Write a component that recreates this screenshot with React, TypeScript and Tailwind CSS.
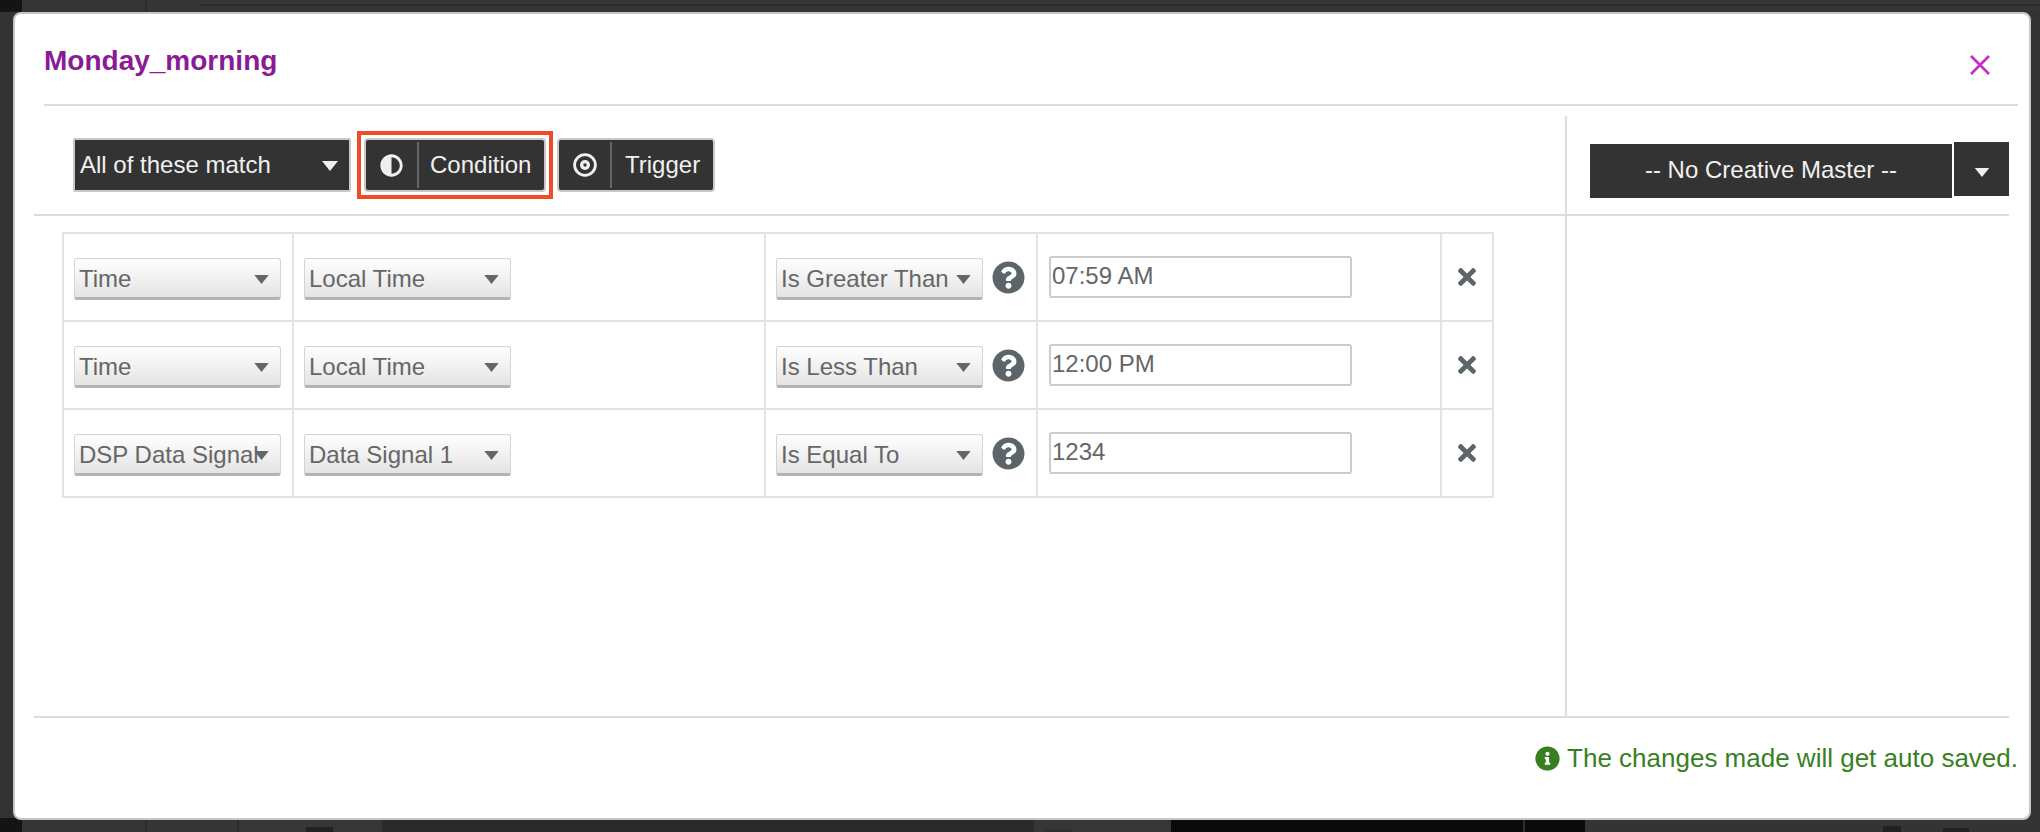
import React from 'react';
import { FaAdjust, FaInfoCircle, FaQuestionCircle, FaTimes } from 'react-icons/fa';

interface Rule {
  field: string;
  source: string;
  operator: string;
  value: string;
}

const rules: Rule[] = [
  { field: 'Time', source: 'Local Time', operator: 'Is Greater Than', value: '07:59 AM' },
  { field: 'Time', source: 'Local Time', operator: 'Is Less Than', value: '12:00 PM' },
  { field: 'DSP Data Signal', source: 'Data Signal 1', operator: 'Is Equal To', value: '1234' },
];

function Caret({ className }: { className: string }) {
  return (
    <svg viewBox="0 0 16 10" className={className} aria-hidden="true">
      <path d="M0 0h16L8 10z" fill="currentColor" />
    </svg>
  );
}

function SelectBox({ label, width }: { label: string; width: string }) {
  return (
    <div
      className={`relative mt-[4px] h-[42px] ${width} flex-none rounded-[3px] border border-b-[3px] border-[#d4d4d4] border-b-[#b4b4b4] bg-gradient-to-b from-white to-[#e4e4e4] pl-[4px] text-[24px] leading-[40px] text-[#666666]`}
    >
      <span className="block h-[38px] overflow-hidden whitespace-nowrap pr-[16px]">{label}</span>
      <Caret className="absolute right-[11px] top-[16px] h-[9px] w-[15px] text-[#666666]" />
    </div>
  );
}

function ToolButton({ icon, label, width, pad }: { icon: React.ReactNode; label: string; width: string; pad: string }) {
  return (
    <div className={`flex h-[54px] ${width} items-stretch rounded-[4px] border-2 border-[#c8c8c8] bg-[#333333] text-[24px] text-[#f0f0f0]`}>
      <span className="flex w-[51px] flex-none items-center justify-center">{icon}</span>
      <span className="my-[2px] w-[2px] flex-none bg-[#666666]" />
      <span className={`flex flex-1 items-center ${pad}`}>{label}</span>
    </div>
  );
}

function Background() {
  return (
    <div className="flex h-[832px] flex-col justify-between bg-[#333333]">
      <div className="flex h-[12px] bg-[#333333]">
        <div className="w-[22px] bg-[#141414]" />
        <div className="w-[123px] bg-[#353535]" />
        <div className="w-[2px] bg-[#2a2a2a]" />
        <div className="flex-1 bg-[#353535]">
          <div className="ml-[53px] mt-[4px] h-[2px] bg-[#2b2b2b]" />
        </div>
      </div>
      <div className="flex h-[14px]">
        <div className="w-[22px] bg-[#141414]" />
        <div className="w-[123px] bg-[#353535]" />
        <div className="w-[2px] bg-[#2a2a2a]" />
        <div className="w-[90px] bg-[#353535]" />
        <div className="w-[2px] bg-[#2a2a2a]" />
        <div className="w-[143px] bg-[#363636] pl-[67px] pt-[9px]">
          <div className="h-[5px] w-[27px] bg-[#222222]" />
        </div>
        <div className="w-[652px] bg-[#2a2a2a]" />
        <div className="w-[137px] bg-[#363636] pl-[10px] pt-[11px]">
          <div className="h-[3px] w-[27px] bg-[#2e2e2e]" />
        </div>
        <div className="w-[352px] bg-[#0a0a0a]" />
        <div className="w-[2px] bg-[#2f2f2f]" />
        <div className="w-[60px] bg-[#0a0a0a]" />
        <div className="flex flex-1 gap-[42px] bg-[#343434] pl-[298px] pt-[8px]">
          <div className="h-[6px] w-[18px] bg-[#222222]" />
          <div className="mt-[2px] h-[4px] w-[26px] bg-[#222222]" />
        </div>
      </div>
    </div>
  );
}

export default function App() {
  return (
    <div className="relative h-[832px] overflow-hidden font-['Liberation_Sans',Arial,sans-serif]">
      <Background />
      <div className="absolute left-[13px] top-[12px] flex h-[808px] w-[2018px] flex-col rounded-[8px] border-2 border-[#c6c6c6] bg-white">
        {/* Header */}
        <div className="ml-[29px] mr-[11px] flex h-[92px] flex-none justify-between border-b-2 border-[#dddddd]">
          <h1 className="pt-[31px] text-[28px] font-bold leading-[32px] text-[#8a1a96]">Monday_morning</h1>
          <svg viewBox="0 0 20 20" className="mr-[28px] mt-[41px] h-[20px] w-[20px] text-[#c42cc4]" aria-hidden="true">
            <path d="M1 1l18 18M19 1L1 19" stroke="currentColor" strokeWidth="2.6" fill="none" />
          </svg>
        </div>

        {/* Body */}
        <div className="ml-[19px] mr-[20px] mt-[10px] flex h-[602px] flex-none border-b-2 border-[#dddddd]">
          <div className="w-[1531px] flex-none">
            <div className="flex h-[100px] items-center border-b-2 border-[#dddddd] pl-[39px]">
              <div className="relative flex h-[54px] w-[278px] flex-none items-center rounded-[2px] border-2 border-[#c8c8c8] bg-[#333333] pl-[5px] text-[24px] text-[#f0f0f0]">
                All of these match
                <Caret className="absolute right-[11px] top-[20px] h-[12px] w-[16px] text-[#f0f0f0]" />
              </div>
              <div className="ml-[6px] flex-none border-4 border-[#f04a26] p-[3px]">
                <ToolButton icon={<FaAdjust className="h-[23px] w-[23px] text-[#f0f0f0]" />} label="Condition" width="w-[182px]" pad="pl-[11px]" />
              </div>
              <div className="ml-[4px] flex-none">
                <ToolButton
                  icon={
                    <svg viewBox="0 0 24 24" className="h-[24px] w-[24px]" aria-hidden="true">
                      <circle cx="12" cy="12" r="10.4" fill="none" stroke="#f0f0f0" strokeWidth="2.8" />
                      <circle cx="12" cy="12" r="5" fill="#f0f0f0" />
                      <circle cx="12" cy="12" r="1.7" fill="#333333" />
                    </svg>
                  }
                  label="Trigger"
                  width="w-[158px]"
                  pad="pl-[13px]"
                />
              </div>
            </div>

            <table className="ml-[28px] mt-[16px] w-[1430px] table-fixed border-collapse">
              <colgroup>
                <col className="w-[230px]" />
                <col className="w-[472px]" />
                <col className="w-[272px]" />
                <col className="w-[404px]" />
                <col className="w-[52px]" />
              </colgroup>
              <tbody>
                {rules.map((rule) => (
                  <tr key={rule.operator} className="h-[88px]">
                    <td className="border-2 border-[#e2e2e2] pl-[10px]">
                      <SelectBox label={rule.field} width="w-[207px]" />
                    </td>
                    <td className="border-2 border-[#e2e2e2] pl-[10px]">
                      <SelectBox label={rule.source} width="w-[207px]" />
                    </td>
                    <td className="border-2 border-[#e2e2e2] pl-[10px]">
                      <div className="flex items-center gap-[9px]">
                        <SelectBox label={rule.operator} width="w-[207px]" />
                        <FaQuestionCircle className="h-[33px] w-[33px] flex-none text-[#5c666a]" />
                      </div>
                    </td>
                    <td className="border-2 border-[#e2e2e2] pl-[11px]">
                      <input
                        readOnly
                        value={rule.value}
                        className="block h-[42px] w-[303px] rounded-[3px] border-2 border-[#cccccc] bg-white pb-[3px] pl-[1px] text-[24px] text-[#666666] outline-none"
                      />
                    </td>
                    <td className="border-2 border-[#e2e2e2]">
                      <FaTimes className="mx-auto h-[26px] w-[20px] text-[#5c666a]" />
                    </td>
                  </tr>
                ))}
              </tbody>
            </table>
          </div>

          <div className="flex-1 border-l-2 border-[#dddddd]">
            <div className="flex h-[100px] items-start border-b-2 border-[#dddddd] pl-[23px] pt-[26px]">
              <div className="mt-[2px] flex h-[54px] w-[362px] flex-none items-center justify-center bg-[#333333] pb-[2px] text-[24px] text-[#f0f0f0]">
                -- No Creative Master --
              </div>
              <div className="ml-[2px] flex h-[54px] w-[55px] flex-none items-center justify-center bg-[#333333] pt-[6px]">
                <Caret className="h-[9px] w-[16px] text-[#f0f0f0]" />
              </div>
            </div>
          </div>
        </div>

        {/* Footer */}
        <div className="mr-[11px] mt-[25px] flex items-center justify-end gap-[7px] text-[26px] leading-[30px] text-[#38801f]">
          <FaInfoCircle className="h-[25px] w-[25px] flex-none" />
          <span>The changes made will get auto saved.</span>
        </div>
      </div>
    </div>
  );
}
